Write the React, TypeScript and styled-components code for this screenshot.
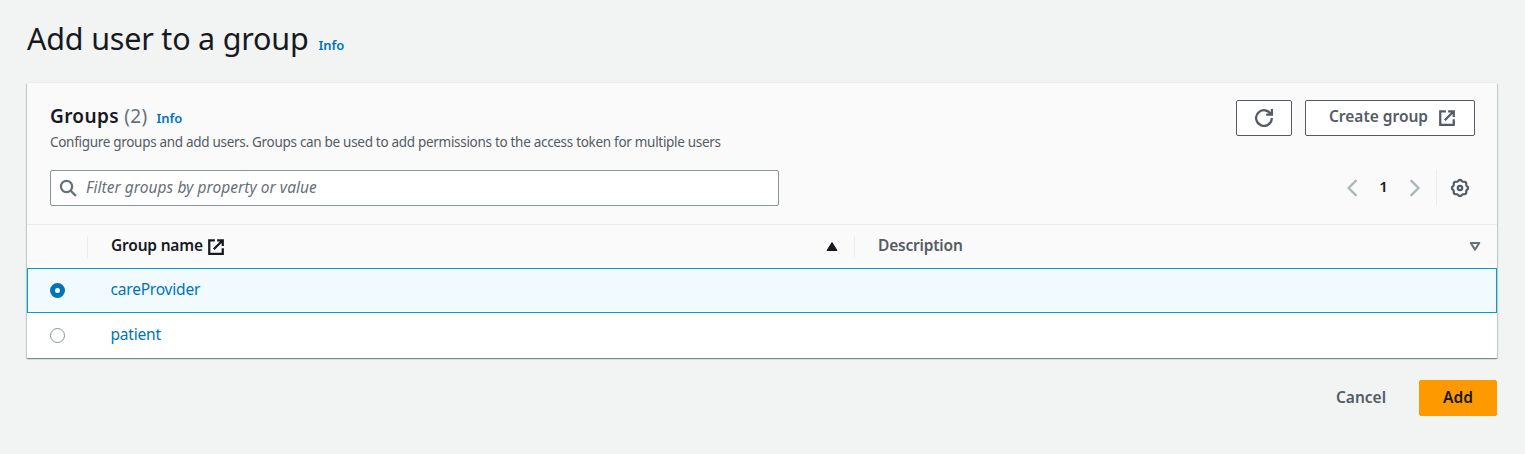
import React from "react";
import styled, { createGlobalStyle } from "styled-components";

const Global = createGlobalStyle`
  * { box-sizing: border-box; }
  body {
    margin: 0;
    background: #f2f3f3;
    color: #16191f;
    font-family: "Noto Sans", "Open Sans", sans-serif;
    font-size: 15px;
  }
`;

const Page = styled.main`
  padding: 19px 28px 0 27px;
`;

const TitleRow = styled.div`
  display: flex;
  align-items: baseline;
  gap: 10px;
  height: 64px;
`;

const Title = styled.h1`
  margin: 0;
  font-size: 30.5px;
  line-height: 38px;
  font-weight: 400;
  letter-spacing: -0.2px;
`;

const InfoLink = styled.a`
  color: #0073bb;
  font-size: 13px;
  font-weight: 600;
  letter-spacing: -0.05px;
  text-decoration: none;
`;

const Card = styled.section`
  background: #fff;
  box-shadow: 0 -1px 0 #eaeded, 0 1px 1px 0 rgba(0, 28, 36, 0.3),
    1px 1px 1px 0 rgba(0, 28, 36, 0.15), -1px 1px 1px 0 rgba(0, 28, 36, 0.15);
`;

const CardHeader = styled.header`
  height: 142px;
  padding: 17px 22px 0 23px;
  background: #fafafa;
  border-bottom: 1px solid #eaeded;
`;

const HeaderTop = styled.div`
  display: flex;
  justify-content: space-between;
  height: 70px;
`;

const GroupsLine = styled.div`
  display: flex;
  align-items: baseline;
  padding-top: 3px;
  line-height: 27px;
`;

const GroupsTitle = styled.h2`
  margin: 0 9px 0 0;
  font-size: 19px;
  font-weight: 600;
  line-height: 27px;
  letter-spacing: 0.35px;
`;

const Count = styled.span`
  color: #687078;
  font-weight: 400;
`;

const Description = styled.p`
  margin: 0;
  color: #545b64;
  font-size: 13.5px;
  line-height: 20px;
  letter-spacing: -0.3px;
`;

const Actions = styled.div`
  display: flex;
  gap: 13px;
`;

const Button = styled.button<{ $kind?: "normal" | "link" | "primary"; $width: number }>`
  display: inline-flex;
  align-items: center;
  justify-content: center;
  gap: 10px;
  width: ${(p) => p.$width}px;
  height: 36px;
  padding: 0 0 2px;
  border: 1px solid
    ${(p) => (p.$kind === "primary" ? "#ff9900" : p.$kind === "link" ? "transparent" : "#545b64")};
  border-radius: 2px;
  background: ${(p) => (p.$kind === "primary" ? "#ff9900" : p.$kind === "link" ? "transparent" : "#fff")};
  color: ${(p) => (p.$kind === "primary" ? "#16191f" : "#545b64")};
  font: 600 15.5px/22px "Noto Sans", sans-serif;
  letter-spacing: 0;
  svg { flex: none; margin-top: 2px; }
`;

const ButtonLabel = styled.span`
  padding: 0 0 2px 5px;
`;

const Tools = styled.div`
  display: flex;
  justify-content: space-between;
`;

const Search = styled.label`
  display: flex;
  align-items: center;
  gap: 9px;
  width: 729px;
  height: 36px;
  padding: 0 8px;
  border: 1px solid #879596;
  border-radius: 2px;
  background: #fff;
`;

const SearchInput = styled.input`
  flex: 1;
  padding: 0 0 2px;
  border: 0;
  outline: 0;
  background: transparent;
  font: italic 15.5px/22px "Noto Sans", sans-serif;
  letter-spacing: 0.05px;
  &::placeholder { color: #687078; opacity: 1; }
`;

const Pager = styled.nav`
  display: flex;
  align-items: center;
  height: 35px;
`;

const PageNumber = styled.span`
  width: 44px;
  padding: 0 0 3px 1px;
  text-align: center;
  font-weight: 600;
`;

const Settings = styled.span`
  display: flex;
  align-items: center;
  height: 35px;
  margin-left: 13px;
  padding: 0 6px 0 14px;
  border-left: 1px solid #eaeded;
`;

const Row = styled.div<{ $selected?: boolean }>`
  display: grid;
  grid-template-columns: 60px 767px 1fr;
  align-items: center;
  height: 45px;
  border: 1px solid ${(p) => (p.$selected ? "#00a1c9" : "transparent")};
  background: ${(p) => (p.$selected ? "#f1faff" : "#fff")};
`;

const HeadRow = styled.div`
  display: grid;
  grid-template-columns: 61px 767px 1fr;
  align-items: center;
  height: 43px;
  background: #fafafa;
`;

const HeadCell = styled.div<{ $muted?: boolean; $divider?: boolean }>`
  display: flex;
  align-items: center;
  height: 22px;
  padding: 0 16px 0 23px;
  border-right: ${(p) => (p.$divider ? "1px solid #eaeded" : "0")};
  color: ${(p) => (p.$muted ? "#545b64" : "#16191f")};
  font-weight: 600;
`;

const HeadLabel = styled.span`
  display: flex;
  align-items: center;
  gap: 4px;
  flex: 1;
  padding-bottom: 3px;
  font-size: 15.5px;
  line-height: 20px;
  letter-spacing: -0.2px;
  svg { margin-top: 3px; }
`;

const RadioCell = styled.div`
  display: flex;
  padding: 0 0 0 22px;
`;

const Radio = styled.span<{ $checked?: boolean }>`
  width: 15px;
  height: 15px;
  border: ${(p) => (p.$checked ? "5px solid #0073bb" : "1px solid #879596")};
  border-radius: 50%;
  background: #fff;
`;

const GroupLink = styled.a`
  padding: 0 0 3px 22.5px;
  color: #0073bb;
  font-size: 15.5px;
  letter-spacing: -0.2px;
`;

const Footer = styled.footer`
  display: flex;
  justify-content: flex-end;
  gap: 8px;
  padding-top: 22px;
`;

const ExternalIcon = () => (
  <svg width="18" height="18" viewBox="0 0 16 16" fill="none" stroke="currentColor" strokeWidth="2">
    <path d="M9 2h5v5M6 10l8-8M14 9v5H2V2h5" />
  </svg>
);

const RefreshIcon = () => (
  <svg width="18" height="18" viewBox="0 0 16 16" fill="none" stroke="currentColor" strokeWidth="2">
    <path d="M10 5h5V0M15 8a7 7 0 1 1-.7-3" />
  </svg>
);

const SearchIcon = () => (
  <svg width="18" height="18" viewBox="0 0 16 16" fill="none" stroke="#687078" strokeWidth="2">
    <circle cx="6.700" cy="6.700" r="5" />
    <path d="m15 15-4.800-4.800" />
  </svg>
);

const Chevron = ({ d }: { d: string }) => (
  <svg width="18" height="18" viewBox="0 0 16 16" fill="none" stroke="#aab7b8" strokeWidth="2">
    <path d={d} />
  </svg>
);

const gearOutline =
  "M" +
  Array.from({ length: 96 }, (_, i) => {
    const angle = (i / 96) * Math.PI * 2;
    const radius = 7.5 + 0.6 * Math.cos(8 * angle);
    return `${(9 + radius * Math.cos(angle)).toFixed(2)} ${(9 + radius * Math.sin(angle)).toFixed(2)}`;
  }).join("L") +
  "Z";

const GearIcon = () => (
  <svg width="18" height="18" viewBox="0 0 18 18" fill="none" stroke="#545b64" strokeWidth="2.200" overflow="visible">
    <path d={gearOutline} />
    <circle cx="9" cy="9" r="2.200" />
  </svg>
);

const SortIcon = ({ up }: { up?: boolean }) => (
  <svg width="12" height="12" viewBox="0 0 12 12" strokeLinejoin="round">
    {up ? (
      <path d="M6 1.500 11 9.500H1z" fill="#16191f" stroke="#16191f" />
    ) : (
      <path d="M1.700 2h8.600L6 8.600z" fill="none" stroke="#687078" strokeWidth="2" />
    )}
  </svg>
);

export default function App() {
  return (
    <Page>
      <Global />
      <TitleRow>
        <Title>Add user to a group</Title>
        <InfoLink>Info</InfoLink>
      </TitleRow>
      <Card>
        <CardHeader>
          <HeaderTop>
            <div>
              <GroupsLine>
                <GroupsTitle>
                  Groups <Count>(2)</Count>
                </GroupsTitle>
                <InfoLink>Info</InfoLink>
              </GroupsLine>
              <Description>
                Configure groups and add users. Groups can be used to add permissions to the access token for
                multiple users
              </Description>
            </div>
            <Actions>
              <Button $width={56} aria-label="Refresh">
                <RefreshIcon />
              </Button>
              <Button $width={170}>
                <ButtonLabel>Create group</ButtonLabel>
                <ExternalIcon />
              </Button>
            </Actions>
          </HeaderTop>
          <Tools>
            <Search>
              <SearchIcon />
              <SearchInput placeholder="Filter groups by property or value" />
            </Search>
            <Pager>
              <Chevron d="M12 1 5 8l7 7" />
              <PageNumber>1</PageNumber>
              <Chevron d="m5 1 7 7-7 7" />
              <Settings>
                <GearIcon />
              </Settings>
            </Pager>
          </Tools>
        </CardHeader>
        <HeadRow>
          <HeadCell $divider />
          <HeadCell $divider>
            <HeadLabel>
              Group name <ExternalIcon />
            </HeadLabel>
            <SortIcon up />
          </HeadCell>
          <HeadCell $muted>
            <HeadLabel>Description</HeadLabel>
            <SortIcon />
          </HeadCell>
        </HeadRow>
        <Row $selected>
          <RadioCell>
            <Radio $checked />
          </RadioCell>
          <GroupLink>careProvider</GroupLink>
        </Row>
        <Row>
          <RadioCell>
            <Radio />
          </RadioCell>
          <GroupLink>patient</GroupLink>
        </Row>
      </Card>
      <Footer>
        <Button $kind="link" $width={100}>
          Cancel
        </Button>
        <Button $kind="primary" $width={78}>
          Add
        </Button>
      </Footer>
    </Page>
  );
}
